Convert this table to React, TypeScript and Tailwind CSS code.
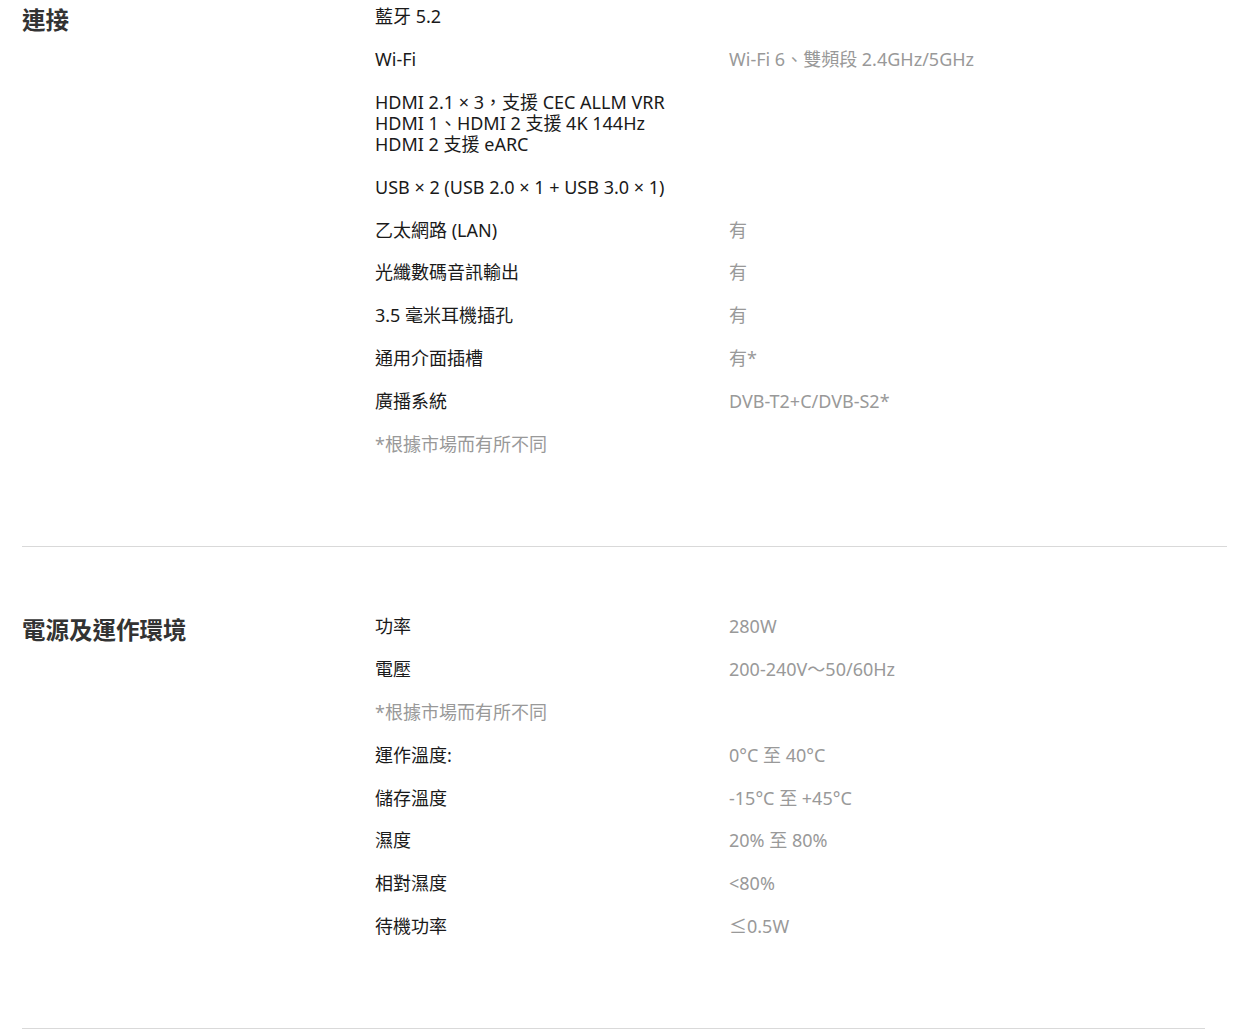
const FONT = "font-['Noto_Sans','Noto_Sans_CJK_TC',sans-serif]";

type Row = { label: string | string[]; value?: string; note?: boolean };

const connect: Row[] = [
  { label: '藍牙 5.2' },
  { label: 'Wi-Fi', value: 'Wi-Fi 6、雙頻段 2.4GHz/5GHz' },
  { label: ['HDMI 2.1 × 3，支援 CEC ALLM VRR', 'HDMI 1、HDMI 2 支援 4K 144Hz', 'HDMI 2 支援 eARC'] },
  { label: 'USB × 2 (USB 2.0 × 1 + USB 3.0 × 1)' },
  { label: '乙太網路 (LAN)', value: '有' },
  { label: '光纖數碼音訊輸出', value: '有' },
  { label: '3.5 毫米耳機插孔', value: '有' },
  { label: '通用介面插槽', value: '有*' },
  { label: '廣播系統', value: 'DVB-T2+C/DVB-S2*' },
  { label: '*根據市場而有所不同', note: true },
];

const power: Row[] = [
  { label: '功率', value: '280W' },
  { label: '電壓', value: '200-240V～50/60Hz' },
  { label: '*根據市場而有所不同', note: true },
  { label: '運作溫度:', value: '0°C 至 40°C' },
  { label: '儲存溫度', value: '-15°C 至 +45°C' },
  { label: '濕度', value: '20% 至 80%' },
  { label: '相對濕度', value: '<80%' },
  { label: '待機功率', value: '≤0.5W' },
];

function Section({ title, rows, top, line }: { title: string; rows: Row[]; top: string; line: string }) {
  return (
    <section className={`${top} pb-[91px] border-b border-[#d9d9d9] ${line}`}>
      <div className="flex">
        <h2 className="w-[353px] shrink-0 text-[23.5px] leading-[30px] -mt-[1px] font-bold text-[#333]">{title}</h2>
        <dl className="flex flex-col gap-[21.9px] text-[18px] leading-[21px]">
          {rows.map((r, i) => (
            <div key={i} className="flex">
              <dt className={`w-[354px] shrink-0 ${r.note ? 'text-[#999]' : 'text-[#1a1a1a]'}`}>
                {Array.isArray(r.label) ? r.label.map((l) => <div key={l}>{l}</div>) : r.label}
              </dt>
              {r.value && <dd className="text-[#999]">{r.value}</dd>}
            </div>
          ))}
        </dl>
      </div>
    </section>
  );
}

export default function App() {
  return (
    <div className={`${FONT} bg-white px-[22px] min-h-[1032px]`}>
      <Section title="連接" rows={connect} top="pt-[6px]" line="" />
      <Section title="電源及運作環境" rows={power} top="pt-[69px]" line="w-[1183px]" />
    </div>
  );
}
